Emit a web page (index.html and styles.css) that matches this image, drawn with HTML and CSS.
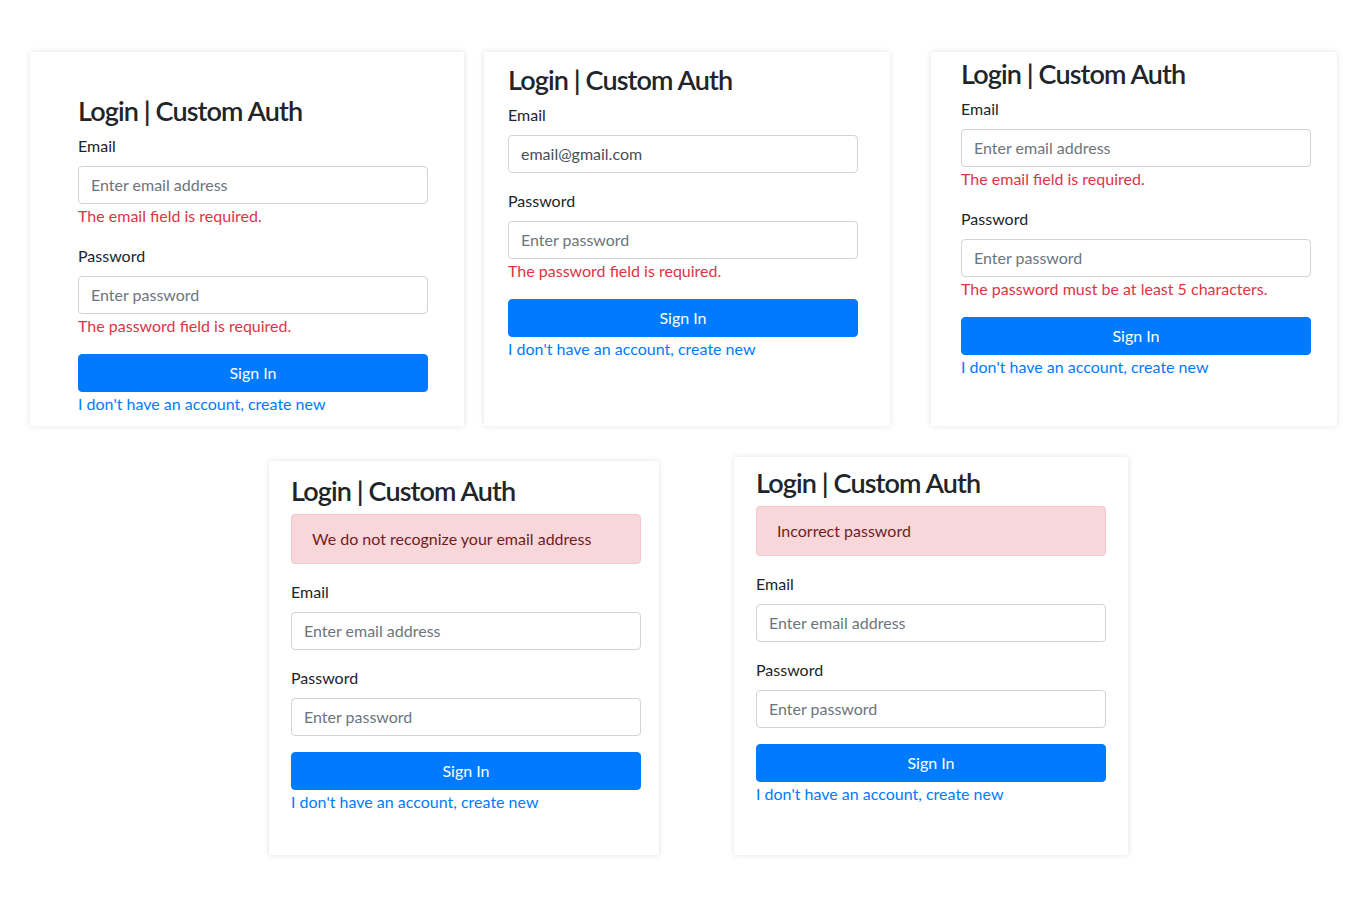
FILE: index.html
```html
<!DOCTYPE html>
<html lang="en">
<head>
<meta charset="utf-8">
<title>Login | Custom Auth</title>
<link rel="stylesheet" href="styles.css">
</head>
<body>
<div class="board">
  <div class="row row-top">
    <div class="card card-1">
      <h3 class="title">Login | Custom Auth</h3>
      <div class="form-group">
        <label class="label">Email</label>
        <input class="input" type="text" placeholder="Enter email address">
        <div class="error">The email field is required.</div>
      </div>
      <div class="form-group">
        <label class="label">Password</label>
        <input class="input" type="password" placeholder="Enter password">
        <div class="error">The password field is required.</div>
      </div>
      <button class="btn">Sign In</button>
      <a class="link" href="#">I don't have an account, create new</a>
    </div>

    <div class="card card-2">
      <h3 class="title">Login | Custom Auth</h3>
      <div class="form-group">
        <label class="label">Email</label>
        <input class="input" type="text" placeholder="Enter email address" value="email@gmail.com">
      </div>
      <div class="form-group">
        <label class="label">Password</label>
        <input class="input" type="password" placeholder="Enter password">
        <div class="error">The password field is required.</div>
      </div>
      <button class="btn">Sign In</button>
      <a class="link" href="#">I don't have an account, create new</a>
    </div>

    <div class="card card-3">
      <h3 class="title">Login | Custom Auth</h3>
      <div class="form-group">
        <label class="label">Email</label>
        <input class="input" type="text" placeholder="Enter email address">
        <div class="error">The email field is required.</div>
      </div>
      <div class="form-group">
        <label class="label">Password</label>
        <input class="input" type="password" placeholder="Enter password">
        <div class="error">The password must be at least 5 characters.</div>
      </div>
      <button class="btn">Sign In</button>
      <a class="link" href="#">I don't have an account, create new</a>
    </div>
  </div>

  <div class="row row-bottom">
    <div class="card card-4">
      <h3 class="title">Login | Custom Auth</h3>
      <div class="alert">We do not recognize your email address</div>
      <div class="form-group">
        <label class="label">Email</label>
        <input class="input" type="text" placeholder="Enter email address">
      </div>
      <div class="form-group">
        <label class="label">Password</label>
        <input class="input" type="password" placeholder="Enter password">
      </div>
      <button class="btn">Sign In</button>
      <a class="link" href="#">I don't have an account, create new</a>
    </div>

    <div class="card card-5">
      <h3 class="title">Login | Custom Auth</h3>
      <div class="alert">Incorrect password</div>
      <div class="form-group">
        <label class="label">Email</label>
        <input class="input" type="text" placeholder="Enter email address">
      </div>
      <div class="form-group">
        <label class="label">Password</label>
        <input class="input" type="password" placeholder="Enter password">
      </div>
      <button class="btn">Sign In</button>
      <a class="link" href="#">I don't have an account, create new</a>
    </div>
  </div>
</div>
</body>
</html>
```
FILE: styles.css
```css
* { box-sizing: border-box; }

html, body {
  margin: 0;
  padding: 0;
  background: #ffffff;
}

body {
  font-family: "Segoe UI", Lato, "Open Sans", sans-serif;
  font-size: 16px;
  line-height: 24px;
  color: #212529;
}

.board {
  padding: 52px 0 60px 0;
}

.row {
  display: flex;
}

.row-top {
  align-items: flex-start;
}

.row-bottom {
  margin-top: 31px;
  align-items: flex-end;
}

.card {
  background: #ffffff;
  box-shadow: 0 0 6px rgba(0, 0, 0, 0.12);
  display: flex;
  flex-direction: column;
  align-items: flex-start;
}

.card-1 { margin-left: 30px; width: 434px; height: 374px; padding: 40px 0 0 48px; }
.card-2 { margin-left: 20px; width: 406px; height: 374px; padding: 9px 0 0 24px; }
.card-3 { margin-left: 41px; width: 406px; height: 374px; padding: 3px 0 0 30px; }
.card-4 { margin-left: 269px; width: 390px; height: 394px; padding: 11px 0 0 22px; }
.card-5 { margin-left: 75px; width: 394px; height: 398px; padding: 7px 0 0 22px; }

.title {
  margin: 0 0 6px 0;
  padding-top: 2px;
  font-size: 27px;
  line-height: 33.6px;
  font-weight: 600;
  letter-spacing: -0.9px;
  color: #212529;
}

.form-group {
  width: 350px;
  margin-bottom: 16px;
}

.label {
  display: inline-block;
  margin-bottom: 8px;
  line-height: 24px;
}

.input {
  display: block;
  width: 350px;
  height: 38px;
  padding: 6px 12px;
  font-family: inherit;
  font-size: 16px;
  line-height: 24px;
  color: #495057;
  background: #ffffff;
  border: 1px solid #ced4da;
  border-radius: 4px;
  outline: none;
}

.input::placeholder {
  color: #6c757d;
  opacity: 1;
}

.error {
  color: #dc3545;
  line-height: 24px;
}

.btn {
  display: block;
  width: 350px;
  height: 38px;
  padding: 6px 12px;
  font-family: inherit;
  font-size: 16px;
  line-height: 24px;
  color: #ffffff;
  background: #007bff;
  border: 1px solid #007bff;
  border-radius: 4px;
  text-align: center;
}

.link {
  color: #007bff;
  text-decoration: none;
  line-height: 24px;
}

.alert {
  width: 350px;
  padding: 12px 20px;
  margin-bottom: 16px;
  color: #721c24;
  background: #f8d7da;
  border: 1px solid #f5c6cb;
  border-radius: 4px;
  line-height: 24px;
}
```
